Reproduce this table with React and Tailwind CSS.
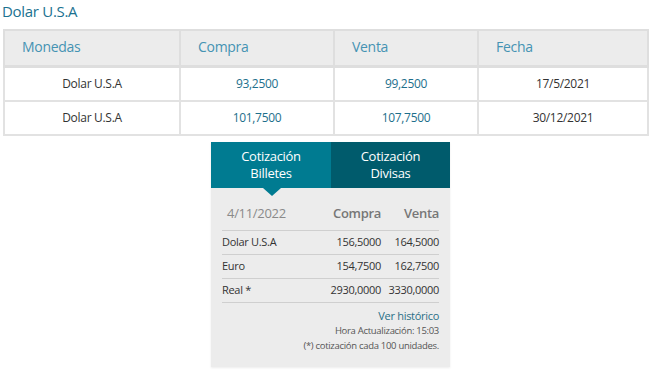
const rates = [
  { moneda: "Dolar U.S.A", compra: "93,2500", venta: "99,2500", fecha: "17/5/2021" },
  { moneda: "Dolar U.S.A", compra: "101,7500", venta: "107,7500", fecha: "30/12/2021" },
];

const billetes = [
  { name: "Dolar U.S.A", compra: "156,5000", venta: "164,5000" },
  { name: "Euro", compra: "154,7500", venta: "162,7500" },
  { name: "Real *", compra: "2930,0000", venta: "3330,0000" },
];

export default function App() {
  return (
    <div className="w-[653px] h-[370px] overflow-hidden bg-white font-['Open_Sans',sans-serif]">
      <h2 className="pl-[2px] text-[15px] leading-[22px] text-[#1b7290] tracking-[-0.3px]">Dolar U.S.A</h2>

      {/* Historic table */}
      <table className="mt-[7px] ml-[3px] w-[646px] border-collapse table-fixed">
        <colgroup>
          <col className="w-[176px]" />
          <col className="w-[154px]" />
          <col className="w-[144px]" />
          <col />
        </colgroup>
        <thead>
          <tr className="bg-[#ececec] h-[36px]">
            {["Monedas", "Compra", "Venta", "Fecha"].map((h) => (
              <th
                key={h}
                className="border-2 border-[#dedede] border-b-[3px] pl-[17px] pb-[2px] text-left font-normal text-[14px] text-[#4593b3] tracking-[-0.3px]"
              >
                {h}
              </th>
            ))}
          </tr>
        </thead>
        <tbody>
          {rates.map((r, i) => (
            <tr key={i} className={`${i === 0 ? "h-[35px]" : "h-[34px]"} text-[12px] tracking-[-0.3px]`}>
              <td className="border-2 border-[#e2e2e2] text-center text-[#333]">{r.moneda}</td>
              <td className="border-2 border-[#e2e2e2] text-center text-[#1e6f8c]">{r.compra}</td>
              <td className="border-2 border-[#e2e2e2] text-center text-[#1e6f8c]">{r.venta}</td>
              <td className="border-2 border-[#e2e2e2] text-center text-[#333]">{r.fecha}</td>
            </tr>
          ))}
        </tbody>
      </table>

      {/* Cotización widget */}
      <div className="ml-[211px] mt-[6px] w-[239px] h-[225px] bg-[#ececec] shadow-[0_1px_2px_rgba(0,0,0,0.08)]">
        <div className="flex h-[46px]">
          <div className="relative flex w-[120px] flex-col items-center justify-center bg-[#007b91] text-[13px] leading-[17px] text-white tracking-[-0.3px]">
            <span>Cotización</span>
            <span>Billetes</span>
            <span className="absolute left-[52px] top-[46px] h-0 w-0 border-x-[9px] border-t-[8px] border-x-transparent border-t-[#007b91]" />
          </div>
          <div className="flex flex-1 flex-col items-center justify-center bg-[#005b6c] text-[13px] leading-[17px] text-white tracking-[-0.3px]">
            <span>Cotización</span>
            <span>Divisas</span>
          </div>
        </div>

        <div className="px-[11px] pt-[16px]">
          <div className="flex items-center border-b border-[#cfcfcf] pb-[8px] text-[13px] leading-[18px] tracking-[-0.3px]">
            <span className="flex-1 pl-[5px] text-[#8a8a8a]">4/11/2022</span>
            <span className="w-[60px] text-right font-semibold text-[#777]">Compra</span>
            <span className="w-[58px] text-right font-semibold text-[#777]">Venta</span>
          </div>
          {billetes.map((b) => (
            <div
              key={b.name}
              className="flex h-[24px] items-center border-b border-[#cfcfcf] text-[11px] text-[#333] tracking-[-0.3px]"
            >
              <span className="flex-1">{b.name}</span>
              <span className="w-[60px] text-right">{b.compra}</span>
              <span className="w-[58px] text-right">{b.venta}</span>
            </div>
          ))}
          <div className="flex flex-col items-end pt-[5px] tracking-[-0.3px]">
            <span className="text-[11px] leading-[16px] text-[#2a6f86]">Ver histórico</span>
            <span className="text-[9.5px] leading-[14px] text-[#555]">Hora Actualización: 15:03</span>
            <span className="text-[9.5px] leading-[15px] text-[#555]">(*) cotización cada 100 unidades.</span>
          </div>
        </div>
      </div>
    </div>
  );
}
